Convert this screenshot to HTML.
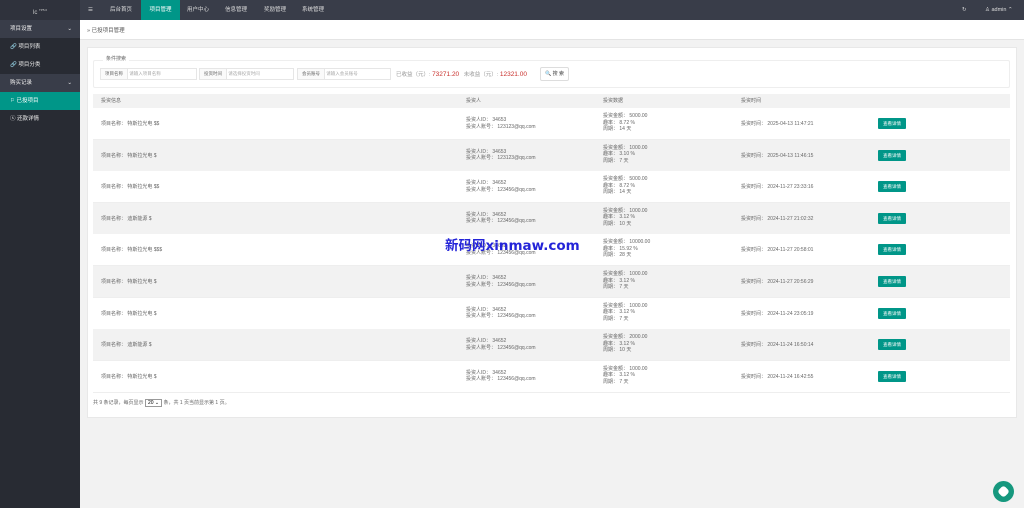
<!DOCTYPE html>
<html><head><meta charset="utf-8"><style>
*{margin:0;padding:0;box-sizing:border-box}
body{width:1024px;height:508px;overflow:hidden;background:#f2f2f2;font-family:"Liberation Sans","Noto Sans CJK SC",sans-serif;font-size:5px;color:#666;position:relative}
.abs{position:absolute}
#top{left:0;top:0;width:1024px;height:20px;background:#393d49}
#top .nav{position:absolute;top:0;height:20px;line-height:20px;color:#ddd;font-size:5.5px}
#side{left:0;top:20px;width:80px;height:488px;background:#282b33}
.si{position:absolute;left:0;width:80px;height:18px;line-height:18px;color:#eee;font-size:5.5px;padding-left:10px}
.bc{left:80px;top:20px;width:944px;height:20px;background:#fff;border-bottom:1px solid #e4e4e4}
#panel{left:87px;top:47px;width:930px;height:371px;background:#fff;border:1px solid #e8e8e8}
.row{position:absolute;left:93px;width:917px;height:32px;border-bottom:1px solid #eee}
.c{position:absolute;line-height:6.5px}
.btn{position:absolute;left:785px;width:28px;height:11px;background:#009688;color:#fff;font-size:4.5px;text-align:center;line-height:11px;border-radius:1px}
.inp{position:absolute;top:68px;height:12px;border:1px solid #e6e6e6;font-size:4.5px;line-height:10px;color:#aaa}
.inp b{display:inline-block;font-weight:normal;color:#666;background:#fafafa;border-right:1px solid #e6e6e6;padding:0 4px;height:10px}
</style></head><body>
<div id="top" class="abs">
<div class="nav" style="left:0;width:80px;background:#2f323c;text-align:center;color:#ccc;font-size:6px">lc <sup style="font-size:3px">TP5.0</sup></div>
<div class="nav" style="left:88px">☰</div>
<div class="nav" style="left:110px">后台首页</div>
<div class="nav" style="left:141px;width:39px;background:#009688;color:#fff;text-align:center">项目管理</div>
<div class="nav" style="left:187px">用户中心</div>
<div class="nav" style="left:225px">信息管理</div>
<div class="nav" style="left:264px">奖励管理</div>
<div class="nav" style="left:302px">系统管理</div>
<div class="nav" style="left:962px">↻</div>
<div class="nav" style="left:985px">♙ admin ⌃</div>
</div>
<div id="side" class="abs">
<div class="si" style="top:0;background:#393d49">项目设置<span style="position:absolute;right:8px">⌄</span></div>
<div class="si" style="top:18px">🔗 项目列表</div>
<div class="si" style="top:36px">🔗 项目分类</div>
<div class="si" style="top:54px;background:#393d49">购买记录<span style="position:absolute;right:8px">⌄</span></div>
<div class="si" style="top:72px;background:#009688;color:#fff">⚐ 已投项目</div>
<div class="si" style="top:90px">ⓢ 还款详情</div>
</div>
<div class="bc abs"><span style="position:absolute;left:7px;top:6px;font-size:5.5px;color:#555">» 已投项目管理</span></div>
<div id="panel" class="abs"></div>
<div class="abs" style="left:93px;top:60px;width:917px;height:28px;border:1px solid #eee;border-radius:2px"></div>
<div class="abs" style="left:103px;top:55px;background:#fff;padding:0 3px;font-size:5px">条件搜索</div>
<div class="inp" style="left:100px;width:97px"><b>项目名称</b> 请输入项目名称</div>
<div class="inp" style="left:199px;width:95px"><b>投资时间</b> 请选择投资时间</div>
<div class="inp" style="left:297px;width:94px"><b>会员账号</b> 请输入会员账号</div>
<div class="abs" style="left:396px;top:70px;font-size:5.5px;color:#999">已收益（元）: <span style="color:#c9302c;font-size:6.5px">73271.20</span> &nbsp; 未收益（元）: <span style="color:#c9302c;font-size:6.5px">12321.00</span></div>
<div class="abs" style="left:540px;top:67px;width:29px;height:14px;border:1px solid #ddd;border-radius:2px;line-height:12px;text-align:center;font-size:5px;color:#444">🔍 搜 索</div>
<div class="abs" style="left:93px;top:94px;width:917px;height:14px;background:#f2f2f2;line-height:14px">
<span class="c" style="left:8px;top:4px">投资信息</span><span class="c" style="left:373px;top:4px">投资人</span><span class="c" style="left:510px;top:4px">投资数据</span><span class="c" style="left:648px;top:4px">投资时间</span></div>
<div id="rows"></div>
<div class="abs" style="left:93px;top:399px;font-size:5px">共 9 条记录，每页显示 <span style="display:inline-block;border:1px solid #999;padding:0 2px;color:#000">20 ⌄</span> 条，共 1 页当前显示第 1 页。</div>
<div class="abs" style="left:445px;top:234px;color:#2424d8;font-size:13.5px;font-weight:bold;font-family:'DejaVu Sans','Noto Sans CJK SC',sans-serif">新码网xinmaw.com</div>
<div class="abs" style="left:993px;top:481px;width:21px;height:21px;border-radius:50%;background:#16987e"><div style="position:absolute;left:6px;top:6px;width:9px;height:9px;background:#fff;border-radius:3px;transform:rotate(45deg)"></div></div>
<script>
var d=[["特斯拉光电 $$","34653","123123","5000.00","8.72","14","2025-04-13 11:47:21"],["特斯拉光电 $","34653","123123","1000.00","3.10","7","2025-04-13 11:46:15"],["特斯拉光电 $$","34652","123456","5000.00","8.72","14","2024-11-27 23:33:16"],["迪斯能源 $","34652","123456","1000.00","3.12","10","2024-11-27 21:02:32"],["特斯拉光电 $$$","34652","123456","10000.00","15.92","28","2024-11-27 20:58:01"],["特斯拉光电 $","34652","123456","1000.00","3.12","7","2024-11-27 20:56:29"],["特斯拉光电 $","34652","123456","1000.00","3.12","7","2024-11-24 23:05:19"],["迪斯能源 $","34652","123456","2000.00","3.12","10","2024-11-24 16:50:14"],["特斯拉光电 $","34652","123456","1000.00","3.12","7","2024-11-24 16:42:55"]];
var h="";d.forEach(function(r,i){var t=108+i*31.6;h+='<div class="row" style="top:'+t+'px;background:'+(i%2?'#f2f2f2':'#fff')+'"><span class="c" style="left:8px;top:13px">项目名称： '+r[0]+'</span><span class="c" style="left:373px;top:9px">投资人ID： '+r[1]+'<br>投资人账号： '+r[2]+'@qq.com</span><span class="c" style="left:510px;top:5px">投资金额： '+r[3]+'<br>趣率： '+r[4]+' %<br>周期： '+r[5]+' 天</span><span class="c" style="left:648px;top:13px">投资时间： '+r[6]+'</span><div class="btn" style="top:10px">查看详情</div></div>'});
document.getElementById("rows").innerHTML=h;
</script>
</body></html>
